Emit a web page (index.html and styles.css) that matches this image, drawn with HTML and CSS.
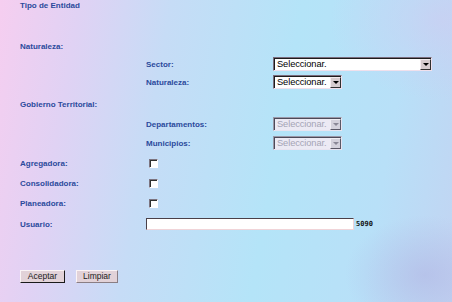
FILE: index.html
```html
<!DOCTYPE html>
<html>
  <head>
    <meta charset="utf-8">
    <title>Tipo de Entidad</title>
    <link rel="stylesheet" href="styles.css">
  </head>
  <body>
    <form class="entidad" action="">
      <div class="title">Tipo de Entidad</div>

      <div class="row row-naturaleza"><span>Naturaleza:</span></div>
      <div class="row row-sector">
        <span></span><span>Sector:</span>
        <div class="select select-wide"><span class="select-text">Seleccionar.</span><span class="select-arrow"></span></div>
      </div>
      <div class="row row-sub">
        <span></span><span>Naturaleza:</span>
        <div class="select"><span class="select-text">Seleccionar.</span><span class="select-arrow"></span></div>
      </div>

      <div class="row row-gobierno"><span>Gobierno Territorial:</span></div>
      <div class="row row-depto">
        <span></span><span>Departamentos:</span>
        <div class="select disabled"><span class="select-text">Seleccionar.</span><span class="select-arrow"></span></div>
      </div>
      <div class="row row-muni">
        <span></span><span>Municipios:</span>
        <div class="select disabled"><span class="select-text">Seleccionar.</span><span class="select-arrow"></span></div>
      </div>

      <div class="row row-check first"><span>Agregadora:</span><span class="check"></span></div>
      <div class="row row-check"><span>Consolidadora:</span><span class="check"></span></div>
      <div class="row row-check"><span>Planeadora:</span><span class="check"></span></div>

      <div class="row row-usuario">
        <span>Usuario:</span>
        <div class="usuario"><input class="text-input" type="text"><span class="code">5090</span></div>
      </div>

      <div class="actions">
        <button type="button" class="btn btn-ok">Aceptar</button>
        <button type="button" class="btn btn-clear">Limpiar</button>
      </div>
    </form>
  </body>
</html>
```

FILE: styles.css
```css
html, body { height: 100%; }
body {
  margin: 0;
  background:
    radial-gradient(ellipse 80px 60px at 425px 275px, rgba(176, 178, 226, 0.55), rgba(176, 178, 226, 0) 100%),
    radial-gradient(ellipse 110px 80px at 440px 20px, rgba(210, 200, 240, 0.5), rgba(210, 200, 240, 0) 100%),
    linear-gradient(100deg, #f6cef0 0%, #e0d2f4 16%, #c6dcf6 34%, #b4e4f8 60%, #b8e0f8 82%, #c2d4f2 100%);
  color: #2b4a9c;
  font-family: "Liberation Sans", Arial, sans-serif;
  font-size: 8px;
  font-weight: bold;
}

.entidad { padding-left: 20px; }

.title { height: 12px; line-height: 12px; }

.row { display: grid; grid-template-columns: 126px 127px auto; align-items: center; height: 12px; }
.row-naturaleza { margin-top: 28px; }
.row-sector { margin-top: 5px; height: 14px; }
.row-sub { margin-top: 4px; height: 14px; }
.row-gobierno { margin-top: 9px; }
.row-depto { margin-top: 7px; height: 14px; }
.row-muni { margin-top: 5px; height: 14px; }
.row-check { margin-top: 8px; }
.row-check.first { margin-top: 7px; }
.row-usuario { margin-top: 9px; }

/* fake old style combo */
.select {
  display: flex;
  width: 69px;
  height: 14px;
  box-sizing: border-box;
  background: #fff;
  border: 1px solid;
  border-color: #7a6c7c #f0e0ec #f0e0ec #7a6c7c;
  box-shadow: inset 1px 1px 0 #1c1c1c;
  padding: 1px 0 0 1px;
}
.select-wide { width: 159px; }
.select-text {
  flex: 1;
  padding-left: 2px;
  font-weight: normal;
  font-size: 9.3px;
  line-height: 11px;
  color: #000;
  letter-spacing: -0.1px;
}
.select-arrow {
  position: relative;
  width: 11px;
  height: 11px;
  box-sizing: border-box;
  background: #d6cccf;
  border: 1px solid;
  border-color: #f4ecf0 #303030 #303030 #f4ecf0;
}
.select-arrow::after {
  content: "";
  position: absolute;
  left: 2px;
  top: 3px;
  border-left: 3px solid transparent;
  border-right: 3px solid transparent;
  border-top: 3px solid #000;
}
.select.disabled { background: #eceaf4; border-color: #9a98a8 #e8e4f0 #e8e4f0 #9a98a8; box-shadow: inset 1px 1px 0 #4c4a58; }
.select.disabled .select-text { color: #a4a4b4; }
.select.disabled .select-arrow { background: #d4d2dc; border-color: #f0eef4 #5a5866 #5a5866 #f0eef4; }
.select.disabled .select-arrow::after { border-top-color: #8a8896; }

.check {
  width: 9px;
  height: 9px;
  box-sizing: border-box;
  margin-left: 3px;
  background: #fff;
  border: 1px solid;
  border-color: #7c7480 #fff #fff #7c7480;
  box-shadow: inset 1px 1px 0 #303030;
}

.usuario { grid-column: 2 / 4; display: flex; align-items: center; gap: 2px; }
.text-input {
  width: 208px;
  height: 12px;
  box-sizing: border-box;
  margin: 0;
  padding: 0;
  background: #fff;
  border: 1px solid;
  border-color: #4a4048 #f0d4d8 #f0d4d8 #4a4048;
}
.code {
  color: #111;
  font-family: "DejaVu Sans Mono", monospace;
  font-size: 7px;
  font-weight: bold;
}

.actions { display: flex; gap: 11px; margin-top: 40px; }
.btn {
  height: 13px;
  box-sizing: border-box;
  margin: 0;
  padding: 0;
  background: #e2d2d8;
  border: 1px solid;
  border-color: #fbf4f6 #1a1a1a #1a1a1a #fbf4f6;
  color: #202020;
  font-family: "Liberation Sans", Arial, sans-serif;
  font-size: 8.5px;
  line-height: 11px;
}
.btn-ok { width: 45px; }
.btn-clear { width: 42px; border-color: #fbf4f6 #8a7e84 #8a7e84 #fbf4f6; }
```
